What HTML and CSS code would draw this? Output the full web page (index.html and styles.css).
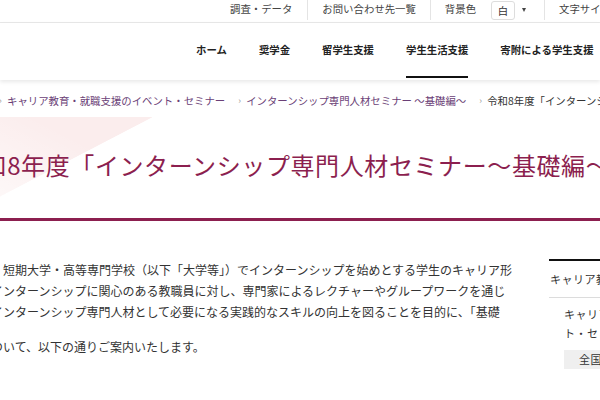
FILE: index.html
```
<!DOCTYPE html>
<html lang="ja">
<head>
<meta charset="utf-8">
<title>令和8年度「インターンシップ専門人材セミナー〜基礎編〜」</title>
<link rel="stylesheet" href="styles.css">
</head>
<body>
<header class="topbar">
  <div class="tb-item">調査・データ</div>
  <div class="tb-item">お問い合わせ先一覧</div>
  <div class="tb-item">背景色<span class="tb-select">白</span><span class="tb-caret"></span></div>
  <div class="tb-item">文字サイズ</div>
</header>
<nav class="gnav">
  <div class="gnav-item"><span>ホーム</span></div>
  <div class="gnav-item"><span>奨学金</span></div>
  <div class="gnav-item"><span>留学生支援</span></div>
  <div class="gnav-item is-active"><span>学生生活支援</span></div>
  <div class="gnav-item"><span>寄附による学生支援</span></div>
</nav>
<ol class="crumbs">
  <li><span class="sep">›</span><a class="crumb-link">キャリア教育・就職支援のイベント・セミナー</a></li>
  <li><span class="sep">›</span><a class="crumb-link">インターンシップ専門人材セミナー 〜基礎編〜</a></li>
  <li><span class="sep">›</span><span class="crumb-current">令和8年度「インターンシップ専門人材セミナー〜基礎編〜」</span></li>
</ol>
<section class="title-area">
  <h1 class="title">令和8年度「インターンシップ専門人材セミナー〜基礎編〜」</h1>
</section>
<div class="layout">
  <main class="main">
    <p>・短期大学・高等専門学校（以下「大学等」）でインターンシップを始めとする学生のキャリア形<br>インターンシップに関心のある教職員に対し、専門家によるレクチャーやグループワークを通じ<br>インターンシップ専門人材として必要になる実践的なスキルの向上を図ることを目的に、「基礎</p>
    <p>ついて、以下の通りご案内いたします。</p>
  </main>
  <aside class="side">
    <div class="side-head">キャリア教育・就職支援</div>
    <div class="side-body">
      <p class="side-link">キャリア教育・就職支援のイベン<br>ト・セミナー</p>
      <div class="side-btn">全国</div>
    </div>
  </aside>
</div>
</body>
</html>
```
FILE: styles.css
```
* { box-sizing: border-box; margin: 0; padding: 0; }
html, body { overflow: hidden; }
body {
  width: 600px;
  height: 400px;
  background: #fff;
  color: #333;
  font-family: "Noto Sans CJK JP", "Noto Sans", sans-serif;
}

/* top utility bar */
.topbar {
  height: 23px;
  border-bottom: 1px solid #e8e8e8;
  display: flex;
  padding-left: 230px;
  font-size: 10.4px;
  color: #444;
  white-space: nowrap;
}
.tb-item {
  display: flex;
  align-items: center;
  height: 20px;
  padding: 0 14px 3px;
  border-left: 1px solid #e4e4e4;
}
.tb-item:first-child { border-left: 0; padding-left: 0; padding-right: 15px; }
.tb-item:nth-child(3) { padding-right: 18px; }
.tb-select {
  width: 24px;
  height: 19px;
  margin: 3px 0 0 15px;
  border: 1px solid #ddd;
  border-radius: 3px;
  text-align: center;
  line-height: 17px;
  color: #333;
}
.tb-caret {
  width: 0;
  height: 0;
  margin: 3px 0 0 7px;
  border-left: 2.5px solid transparent;
  border-right: 2.5px solid transparent;
  border-top: 4px solid #444;
}

/* global nav */
.gnav {
  height: 57px;
  display: flex;
  padding-left: 180px;
  box-shadow: 0 2px 4px rgba(0, 0, 0, 0.09);
  white-space: nowrap;
}
.gnav-item {
  padding: 0 16px;
  font-size: 10.4px;
  font-weight: bold;
  color: #222;
}
.gnav-item span {
  display: block;
  height: 55px;
  padding-top: 20px;
  line-height: 14px;
  border-bottom: 2px solid transparent;
}
.gnav-item.is-active span { border-bottom-color: #111; }

/* breadcrumbs */
.crumbs {
  list-style: none;
  display: flex;
  margin: 13px 0 8px -1px;
  font-size: 10.4px;
  line-height: 16px;
  white-space: nowrap;
}
.crumbs li { display: flex; margin-right: 13px; }
.sep { width: 8px; color: #999; font-size: 9px; }
.crumb-link { color: #6b3f77; }
.crumb-current { color: #333; }

/* title */
.title-area {
  margin-left: -42px;
  padding: 31px 0 36px;
  border-bottom: 3px solid #8c1f4f;
  background:
    linear-gradient(to top right, rgba(255, 255, 255, 0.85), rgba(255, 255, 255, 0) 70%) 0 0 / 194px 100% no-repeat,
    linear-gradient(to bottom right, #fbeded 50%, rgba(251, 237, 237, 0) 50.4%) 0 0 / 194px 100% no-repeat;
}
.title {
  font-size: 24px;
  letter-spacing: 0.6px;
  line-height: 34px;
  font-weight: normal;
  color: #8c1f4f;
  white-space: nowrap;
}

/* content */
.layout {
  display: flex;
  align-items: flex-start;
  margin-top: 38px;
}
.main {
  flex: 0 0 521px;
  min-width: 0;
  margin-left: -9px;
  font-size: 12px;
  line-height: 21px;
  white-space: nowrap;
  color: #333;
}
.main p + p { margin-top: 14px; }

.side {
  flex: 0 0 220px;
  min-width: 0;
  margin-left: 37px;
  border-top: 2px solid #111;
  font-size: 11px;
  letter-spacing: 0.5px;
  white-space: nowrap;
  color: #333;
}
.side-head {
  padding: 9px 1px;
  line-height: 18px;
  border-bottom: 1px solid #dcdcdc;
}
.side-body { padding: 7px 0 0 15px; }
.side-link { line-height: 19px; }
.side-btn {
  margin-top: 7px;
  padding-left: 15px;
  line-height: 19px;
  background: #efefef;
}
```
